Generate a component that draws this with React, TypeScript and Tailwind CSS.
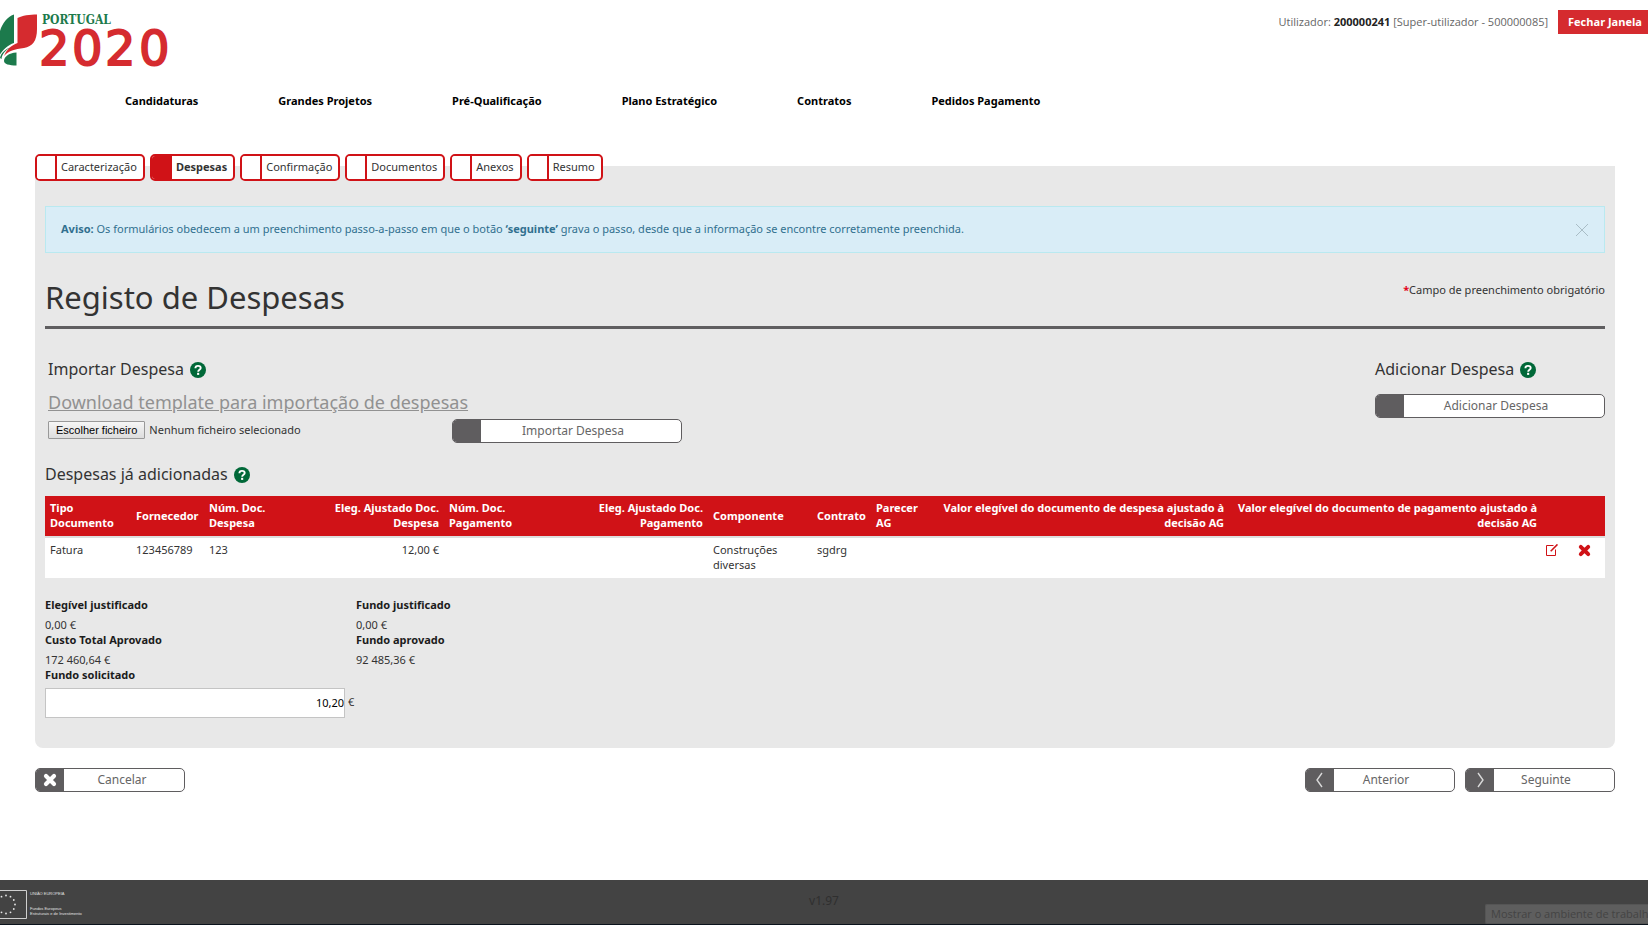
import React from 'react';

interface ColumnDefinition {
  title: string;
  lines: string[];
  width: string;
  align?: string;
  value: string;
}

const NAV_ITEMS = ['Candidaturas', 'Grandes Projetos', 'Pré-Qualificação', 'Plano Estratégico', 'Contratos', 'Pedidos Pagamento'];

const TABS = ['Caracterização', 'Despesas', 'Confirmação', 'Documentos', 'Anexos', 'Resumo'];

const COLUMNS: ColumnDefinition[] = [
  { title: 'tipo', lines: ['Tipo', 'Documento'], width: 'w-[86px]', value: 'Fatura' },
  { title: 'fornecedor', lines: ['Fornecedor'], width: 'w-[73px]', value: '123456789' },
  { title: 'num-despesa', lines: ['Núm. Doc.', 'Despesa'], width: 'w-[112px]', value: '123' },
  { title: 'eleg-despesa', lines: ['Eleg. Ajustado Doc.', 'Despesa'], width: 'w-[128px]', align: 'text-right', value: '12,00 €' },
  { title: 'num-pagamento', lines: ['Núm. Doc.', 'Pagamento'], width: 'w-[136px]', value: '' },
  { title: 'eleg-pagamento', lines: ['Eleg. Ajustado Doc.', 'Pagamento'], width: 'w-[128px]', align: 'text-right', value: '' },
  { title: 'componente', lines: ['Componente'], width: 'w-[104px]', value: 'Construções diversas' },
  { title: 'contrato', lines: ['Contrato'], width: 'w-[59px]', value: 'sgdrg' },
  { title: 'parecer', lines: ['Parecer', 'AG'], width: 'w-[55px]', value: '' },
  { title: 'valor-despesa', lines: ['Valor elegível do documento de despesa ajustado à', 'decisão AG'], width: 'w-[303px]', align: 'text-right', value: '' },
  { title: 'valor-pagamento', lines: ['Valor elegível do documento de pagamento ajustado à', 'decisão AG'], width: 'w-[313px]', align: 'text-right', value: '' },
];

const Logo = () => (
  <svg className="block h-[70px] w-[180px] overflow-visible" viewBox="0 0 180 70" role="img" aria-label="Portugal 2020">
    <path fill="#1c7a4c" d="M14 14.500V43C8 45 3 49.500 0 54.500V31C2.500 23 7 17 14 14.500Z" />
    <path fill="#d52b2f" d="M17.500 18C22 15.500 30 14.500 37 14.500V29C37 41 32.500 46.500 24 48C14.500 49.500 8.500 50.500 4 56C6.500 49.500 11 45.500 17.500 43Z" />
    <path fill="#1c7a4c" d="M16.500 52.500V65.500C9 65.500 4 64 4 61C4 57 8.500 53 16.500 52.500Z" />
    <path fill="#1c7a4c" d="M0 58C1 53 5 49.500 10 47.500C5.500 50.500 2 54 1.500 59Z" />
    <text x="42" y="24" fontSize="12" fontWeight="700" fill="#1c7a4c" fontFamily="'DejaVu Serif Condensed', 'DejaVu Serif', serif">PORTUGAL</text>
    <text x="39 72 105 139" y="65" fontSize="48" fill="#d52b2f" stroke="#d52b2f" strokeWidth="1.800" fontFamily="'DejaVu Sans', sans-serif">2020</text>
  </svg>
);

const HelpIcon = () => (
  <svg className="mt-[2px] size-4 shrink-0" viewBox="0 0 16 16" role="img" aria-label="Ajuda">
    <circle cx="8" cy="8" r="8" fill="#006838" />
    <path d="M5.400 6.300C5.400 4.700 6.500 3.900 8 3.900C9.600 3.900 10.700 4.700 10.700 6C10.700 7.800 8.200 7.700 8.200 9.700" fill="none" stroke="#fff" strokeWidth="1.900" />
    <rect x="7.100" y="10.800" width="2.100" height="2.100" fill="#fff" />
  </svg>
);

const CrossIcon = ({ className }: { className: string }) => (
  <svg className={className} viewBox="0 0 14 14" aria-hidden="true">
    <path d="M3 3L11 11M11 3L3 11" fill="none" stroke="currentColor" strokeWidth="4.200" strokeLinecap="round" />
  </svg>
);

const EditIcon = () => (
  <svg className="size-3" viewBox="0 0 12 12" aria-hidden="true">
    <path d="M7.500 1.500H.5V11.500H9.500V5.500" fill="none" stroke="currentColor" />
    <path d="M4.700 7.200L11.500 .4" fill="none" stroke="currentColor" strokeWidth="1.600" />
  </svg>
);

const Chevron = ({ d }: { d: string }) => (
  <svg className="h-4 w-2" viewBox="0 0 8 16" aria-hidden="true">
    <path d={d} fill="none" stroke="#d9d9d9" strokeWidth="1.400" />
  </svg>
);

const ActionButton = ({ label, width, labelPadding = 'pr-4', icon }: { label: string; width: string; labelPadding?: string; icon?: React.ReactNode }) => (
  <button type="button" className={`flex h-6 ${width} overflow-hidden rounded-[5px] border border-[#5f5d5f] bg-white text-xs text-[#666]`}>
    <span className="flex h-full w-7 shrink-0 items-center justify-center bg-[#5f5d5f] text-white">{icon}</span>
    <span className={`flex-1 leading-[22px] ${labelPadding}`}>{label}</span>
  </button>
);

const Figure = ({ label, value }: { label: string; value: string }) => (
  <div>
    <dt className="h-5 font-bold leading-[15px] text-[#1c1c1c]">{label}</dt>
    <dd className="h-[15px] leading-[15px]">{value}</dd>
  </div>
);

const App: React.FC = () => (
  <div className="flex min-h-screen flex-col overflow-x-hidden bg-white font-['Noto_Sans','Open_Sans',sans-serif] text-[11px] text-[#333]">
    <header>
      <div className="flex justify-between">
        <a href="#inicio"><Logo /></a>
        <div className="flex items-start gap-[10px] pt-[10px]">
          <p className="font-['Open_Sans',sans-serif] leading-6 text-[#666]">
            Utilizador: <b className="text-[#222]">200000241</b> [Super-utilizador - 500000085]
          </p>
          <button type="button" className="h-6 bg-[#d52b2f] pl-[10px] pr-[6px] font-['Open_Sans',sans-serif] text-[11px] font-bold text-white">Fechar Janela</button>
        </div>
      </div>
      <nav className="flex gap-20 pl-[125px] pt-[22px] font-bold leading-[18px] text-black">
        {NAV_ITEMS.map(item => <a key={item} href="#menu">{item}</a>)}
      </nav>
    </header>

    <main className="pl-[35px] pr-[33px] pt-11">
      {/* Step tabs sit half over the top edge of the panel */}
      <div className="relative z-10 -mb-[15px] flex gap-[5px]">
        {TABS.map(tab => {
          const active = tab === 'Despesas';
          return (
            <button key={tab} type="button" className="flex h-[27px] overflow-hidden rounded-[5px] border-2 border-[#d01217] bg-white">
              <span className={`h-full w-5 shrink-0 border-r-2 border-[#d01217] ${active ? 'bg-[#d01217]' : 'bg-white'}`} />
              <span className={`pl-1 pr-[6px] leading-[22px] ${active ? 'font-bold' : ''}`}>{tab}</span>
            </button>
          );
        })}
      </div>

      <section className="rounded-b-[8px] bg-[#e8e8e8] px-[10px] pb-[30px] pt-10">
        <div className="flex items-center justify-between border border-[#b9e9f0] bg-[#d9edf7] px-[15px] pb-[15px] pt-[13px] leading-[17px] text-[#31708f]">
          <p>
            <b>Aviso:</b> Os formulários obedecem a um preenchimento passo-a-passo em que o botão <b>‘seguinte’</b> grava o passo, desde que a informação se encontre corretamente preenchida.
          </p>
          <button type="button" aria-label="Fechar" className="pt-[2px]">
            <svg className="size-[14px]" viewBox="0 0 14 14" aria-hidden="true"><path d="M1 1L13 13M13 1L1 13" stroke="#a9bdc6" fill="none" /></svg>
          </button>
        </div>

        <div className="mt-6 flex items-start justify-between border-b-[3px] border-[#5f5e60] pb-2">
          <h1 className="text-[31px] leading-[41px]">Registo de Despesas</h1>
          <p className="pt-1 leading-[18px]"><span className="font-bold text-[#e2001a]">*</span>Campo de preenchimento obrigatório</p>
        </div>

        <div className="mt-7 flex justify-between">
          <div className="pl-[3px]">
            <h2 className="flex items-center gap-[6px] text-base leading-6">Importar Despesa <HelpIcon /></h2>
            <a href="#template" className="mt-2 block text-lg leading-[26px] text-[#919191] underline underline-offset-1">Download template para importação de despesas</a>
            <div className="flex items-start">
              <div className="flex w-[404px] items-center pt-[6px]">
                <input id="ficheiro" type="file" className="sr-only" />
                <label htmlFor="ficheiro" className="mr-1 h-[18px] rounded-[1px] border border-[#999] bg-linear-to-b from-[#f6f6f6] to-[#dddddd] px-[7px] font-['Liberation_Sans',Arial,sans-serif] leading-4 text-black">Escolher ficheiro</label>
                <span className="leading-[18px]">Nenhum ficheiro selecionado</span>
              </div>
              <div className="pt-1"><ActionButton label="Importar Despesa" width="w-[230px]" /></div>
            </div>
          </div>
          <div>
            <h2 className="flex items-center gap-[6px] text-base leading-6">Adicionar Despesa <HelpIcon /></h2>
            <div className="mt-[13px]"><ActionButton label="Adicionar Despesa" width="w-[230px]" /></div>
          </div>
        </div>

        <h2 className="mt-[19px] flex items-center gap-[6px] text-base leading-6">Despesas já adicionadas <HelpIcon /></h2>
        <table className="mt-[10px] w-full table-fixed border-collapse bg-white leading-[15px]">
          <colgroup>
            {COLUMNS.map(col => <col key={col.title} className={col.width} />)}
            <col className="w-8" />
            <col className="w-[31px]" />
          </colgroup>
          <thead className="bg-[#d01217] text-white">
            <tr className="h-10">
              {COLUMNS.map(col => (
                <th key={col.title} className={`whitespace-nowrap px-[5px] pb-[6px] pt-1 font-bold ${col.align ?? 'text-left'}`}>
                  {col.lines.map(line => <span key={line} className="block">{line}</span>)}
                </th>
              ))}
              <td />
              <td />
            </tr>
          </thead>
          <tbody>
            <tr className="border-t-2 border-[#ddd] align-top">
              {COLUMNS.map(col => (
                <td key={col.title} className={`px-[5px] pb-[6px] pt-1 ${col.align ?? 'text-left'}`}>{col.value}</td>
              ))}
              <td className="px-1 py-[5px] text-[#d01217]"><button type="button" aria-label="Editar" className="block py-[1px]"><EditIcon /></button></td>
              <td className="px-1 py-[5px] text-[#d01217]"><button type="button" aria-label="Remover" className="block py-[1px]"><CrossIcon className="size-[13px]" /></button></td>
            </tr>
          </tbody>
        </table>

        <dl className="mt-[19px] grid w-[622px] grid-cols-2">
          <Figure label="Elegível justificado" value="0,00 €" />
          <Figure label="Fundo justificado" value="0,00 €" />
          <Figure label="Custo Total Aprovado" value="172 460,64 €" />
          <Figure label="Fundo aprovado" value="92 485,36 €" />
        </dl>
        <label htmlFor="fundo" className="mb-[1px] block h-5 font-bold leading-[15px] text-[#1c1c1c]">Fundo solicitado</label>
        <div className="flex items-center gap-[3px]">
          <input id="fundo" type="text" defaultValue="10,20" className="h-[30px] w-[300px] border border-[#c4c4c4] bg-white pb-[2px] text-right text-black" />
          <span className="pb-[2px]">€</span>
        </div>
      </section>

      <div className="mt-5 flex justify-between">
        <ActionButton label="Cancelar" width="w-[150px]" labelPadding="pr-1" icon={<CrossIcon className="size-[14px]" />} />
        <div className="flex gap-[10px]">
          <ActionButton label="Anterior" width="w-[150px]" icon={<Chevron d="M6 1L1 8L6 15" />} />
          <ActionButton label="Seguinte" width="w-[150px]" icon={<Chevron d="M2 1L7 8L2 15" />} />
        </div>
      </div>
    </main>

    <footer className="relative mt-auto flex h-[45px] items-start border-b border-[#0b131c] bg-[#434343] pt-[10px]">
      <div className="flex flex-1 gap-[3px] font-['Liberation_Sans',sans-serif] text-[4px] leading-[5px] text-[#e0e0e0]">
        <svg className="h-[30px] w-[27px]" viewBox="0 0 27 30" aria-hidden="true">
          <path d="M0 .5H26.500V28.500H0" fill="none" stroke="#cfcfcf" />
          {Array.from({ length: 12 }, (_, i) => (
            <circle key={i} cx={6 + 9 * Math.cos((i * Math.PI) / 6)} cy={14.500 + 9 * Math.sin((i * Math.PI) / 6)} r="0.900" fill="#e6e6e6" />
          ))}
        </svg>
        <div className="flex flex-col justify-between pb-1 pt-[1px]">
          <span>UNIÃO EUROPEIA</span>
          <span>Fundos Europeus<br />Estruturais e de Investimento</span>
        </div>
      </div>
      <span className="pt-[1px] text-xs leading-5 text-[#2f2f2f]">v1.97</span>
      <div className="flex-1" />
      <div className="absolute bottom-0 right-0 h-5 w-[163px] overflow-hidden whitespace-nowrap rounded-l-[2px] border border-r-0 border-[#555] bg-[#5e5e5e] pl-[5px] font-['Open_Sans',sans-serif] text-[11px] leading-[18px] text-[#444]">Mostrar o ambiente de trabalho</div>
    </footer>
  </div>
);

export default App;
